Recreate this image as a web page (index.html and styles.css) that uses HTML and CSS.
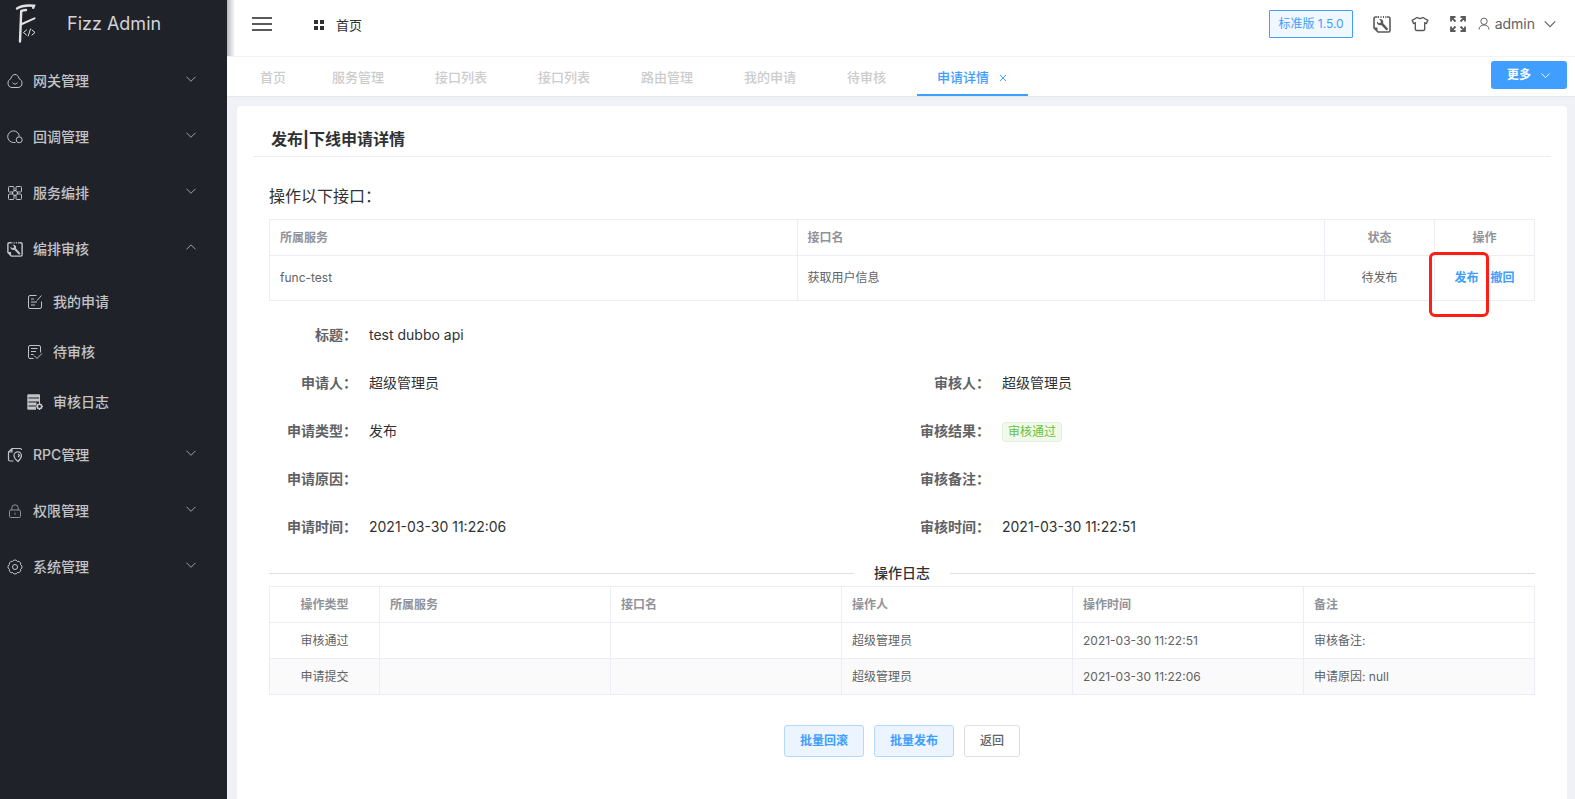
FILE: index.html
```html
<!DOCTYPE html>
<html lang="zh-CN">
<head>
<meta charset="utf-8">
<title>Fizz Admin</title>
<link rel="stylesheet" href="styles.css">
</head>
<body>
<svg class="sprite" aria-hidden="true">
  <symbol id="down" viewBox="0 0 12 12"><path d="M1.5 3.8 6 8.3l4.500-4.500"/></symbol>
  <symbol id="up" viewBox="0 0 12 12"><path d="M1.500 8.300 6 3.800l4.500 4.500"/></symbol>
  <symbol id="tool" viewBox="0 0 18 18">
    <path d="M4.500 2H2.500Q1 2 1 3.500V13l4 4h10.500q1.500 0 1.500-1.500V3.500Q17 2 15.500 2H13.800" stroke-width="1.600"/>
    <path d="M5.500 1v2M8 1v2M10.500 1v2M12.800 1v2" stroke-width="1"/>
    <path class="solid" d="M1 12.500h3.500V17z"/>
    <path class="solid" d="M6.300 4.200c2-.5 4 .8 4 2.700l-.3 1.200 4.800 5.300q.5 1-.3 1.700-.8.500-1.500-.1L8.200 9.900c-1.900.8-4.100-.4-4.300-2.500l.1-1 2 1.800 1.600-.5.300-1.500z"/>
  </symbol>
</svg>
<div class="app">
  <aside class="sidebar">
    <div class="brand">
      <svg class="brand-logo" viewBox="0 0 24 42" aria-hidden="true">
        <path d="M2 5.500C6 3 12 2 19 2.800l-.8 2" stroke-width="2.400"/>
        <path d="M6.500 8c1-.6 2.500-.9 4.500-1M6.200 8 5 38.500" stroke-width="2.400"/>
        <path d="M5.800 21.500 19.500 15.300" stroke-width="2"/>
        <path d="m11.500 27-3 2.500 3 2.500M17 27l3 2.500-3 2.500M15.500 26l-2.300 7" stroke-width="1"/>
      </svg>
      <span class="brand-name">Fizz Admin</span>
    </div>
    <nav class="menu">
      <a class="item" href="#gateway"><svg class="icon" viewBox="0 0 16 16"><path d="M8 1.500c2 0 3.500 1.500 4 4 2 1 3 2.700 3 4.700 0 2.600-1.500 4.300-4 4.300H5c-2.500 0-4-1.700-4-4.300 0-2 1-3.700 3-4.700.5-2.500 2-4 4-4zM5.500 9.500c1.200 2 3.800 2 5 0"/></svg><span>网关管理</span><svg class="arrow"><use href="#down"/></svg></a>
      <a class="item" href="#callback"><svg class="icon" viewBox="0 0 16 16"><path d="M8.500 13.500H6.500a5.800 5.800 0 1 1 5.800-6"/><circle cx="12.200" cy="10.800" r="3"/></svg><span>回调管理</span><svg class="arrow"><use href="#down"/></svg></a>
      <a class="item" href="#service"><svg class="icon" viewBox="0 0 16 16"><rect x="1.500" y="1.500" width="5.500" height="5.500" rx="1"/><rect x="9" y="1.500" width="5.500" height="5.500" rx="1"/><rect x="1.500" y="9" width="5.500" height="5.500" rx="1"/><rect x="9" y="9" width="5.500" height="5.500" rx="1"/><path d="M7 5.500h2M7 10.500h2M5.500 7v2M10.500 7v2"/></svg><span>服务编排</span><svg class="arrow"><use href="#down"/></svg></a>
      <a class="item" href="#audit"><svg class="icon"><use href="#tool"/></svg><span>编排审核</span><svg class="arrow"><use href="#up"/></svg></a>
      <a class="item sub" href="#mine"><svg class="icon" viewBox="0 0 16 16"><path d="M9.500 1.500H3Q1.500 1.500 1.500 3v10q0 1.500 1.500 1.500h10q1.500 0 1.500-1.500V7.500M4 5h3M4 8h6M4 11h4M10 6.500l4.500-5"/></svg><span>我的申请</span></a>
      <a class="item sub" href="#pending"><svg class="icon" viewBox="0 0 16 16"><path d="M6.500 14.500H3Q1.500 14.500 1.500 13V3Q1.500 1.500 3 1.500h9q1.500 0 1.500 1.500v5.500M4 4.500h6.500M4 7.500h5M4 10.500h2.500M7 11.500l3 3L15 9.500"/></svg><span>待审核</span></a>
      <a class="item sub" href="#log"><svg class="icon" viewBox="0 0 16 16"><path class="solid" d="M.5.500h12.500v3H.5zM.5 4.500h12.500v3H.5zM.5 8.500h9v3H.5zM.5 12.500h8.500v3H.5z"/><path d="M1 1h11.500v8M1 1v14h8"/><circle cx="12.500" cy="12.500" r="2.200" stroke-width="1.600"/><path d="M12.500 9v1M12.500 15v1M9 12.500h1M15 12.500h1M10 10l.8.800M15 15l-.8-.8M15 10l-.8.800M10 15l.8-.8"/></svg><span>审核日志</span></a>
      <a class="item" href="#rpc"><svg class="icon" viewBox="0 0 16 16"><path d="M6.500 14H3Q1.500 14 1.500 12.500V5L5 1.500h8q1.500 0 1.500 1.500M5 1.500V5H1.500" stroke-width="1.200"/><path d="M11 14.500c-2.500-2-4-4-4-6a3.700 3.700 0 0 1 7.400 0c0 2-1.400 4-3.400 6zM11 7l1.500 1.500L11 10" stroke-width="1.200"/></svg><span>RPC管理</span><svg class="arrow"><use href="#down"/></svg></a>
      <a class="item" href="#auth"><svg class="icon dim" viewBox="0 0 16 16"><rect x="2.500" y="7" width="11" height="7.500" rx="1.200"/><path d="M4.800 7V5a3.200 3.200 0 0 1 6.400 0v2M8 9.700v2"/></svg><span>权限管理</span><svg class="arrow"><use href="#down"/></svg></a>
      <a class="item" href="#system"><svg class="icon" viewBox="0 0 16 16"><path d="M14.900 6.800V9.200Q12.800 10 13.700 12L12 13.700Q10 12.800 9.200 14.900H6.800Q6 12.800 4 13.700L2.300 12Q3.200 10 1.100 9.200V6.800Q3.200 6 2.300 4L4 2.300Q6 3.200 6.800 1.100H9.200Q10 3.200 12 2.300L13.700 4Q12.800 6 14.900 6.800z"/><circle cx="8" cy="8" r="2.500"/></svg><span>系统管理</span><svg class="arrow"><use href="#down"/></svg></a>
    </nav>
  </aside>
  <div class="main">
    <header class="topbar">
      <button class="plain" type="button" aria-label="收起菜单"><svg class="burger" viewBox="0 0 20 16"><path d="M0 2h20M0 8h20M0 14h20"/></svg></button>
      <a class="crumb" href="#home"><svg class="grid" viewBox="0 0 10 10"><path class="solid" d="M0 0h4v4H0zM6 0h4v4H6zM0 6h4v4H0zM6 6h4v4H6z"/></svg>首页</a>
      <div class="tools">
        <button class="version" type="button">标准版 1.5.0</button>
        <button class="plain" type="button" aria-label="工具"><svg class="tool"><use href="#tool"/></svg></button>
        <button class="plain" type="button" aria-label="主题"><svg class="tool" viewBox="0 0 18 18"><path d="M6 2.500c1.500 1.300 4.500 1.300 6 0l4.800 2.800-1.300 3-1.800-.5V14q0 1.500-1.500 1.500H5.800q-1.500 0-1.500-1.500V7.800l-1.800.5-1.300-3z" stroke-width="1.400"/></svg></button>
        <button class="plain" type="button" aria-label="全屏"><svg class="tool" viewBox="0 0 18 18"><path d="M2 6.500V2h4.500M11.500 2H16v4.500M16 11.500V16h-4.500M6.500 16H2v-4.500M2 2l4.500 4.500M16 2l-4.500 4.500M16 16l-4.500-4.500M2 16l4.500-4.500" stroke-width="1.800"/></svg></button>
        <button class="user" type="button"><svg class="person" viewBox="0 0 12 14"><circle cx="6" cy="4.300" r="3.200"/><path d="M1 12.500c0-6 10-6 10 0"/></svg>admin<svg class="caret"><use href="#down"/></svg></button>
      </div>
    </header>
    <div class="tabbar">
      <nav class="tabs">
        <a class="tab home" href="#t1">首页</a>
        <a class="tab" href="#t2">服务管理</a>
        <a class="tab" href="#t3">接口列表</a>
        <a class="tab" href="#t4">接口列表</a>
        <a class="tab" href="#t5">路由管理</a>
        <a class="tab" href="#t6">我的申请</a>
        <a class="tab" href="#t7">待审核</a>
        <a class="tab active" href="#t8">申请详情<svg class="close" viewBox="0 0 8 8"><path d="m1 1 6 6M7 1 1 7"/></svg></a>
      </nav>
      <button class="more" type="button">更多<svg class="arrow-more"><use href="#down"/></svg></button>
    </div>
    <main class="content">
      <section class="card">
        <h1 class="title">发布|下线申请详情</h1>
        <div class="body">
          <h2 class="lead">操作以下接口：</h2>
          <table class="table">
            <colgroup><col><col><col class="c-type"><col class="c-op"></colgroup>
            <thead><tr><th>所属服务</th><th>接口名</th><th class="center">状态</th><th class="center">操作</th></tr></thead>
            <tbody><tr class="tall"><td>func-test</td><td>获取用户信息</td><td class="center">待发布</td><td><div class="ops"><button class="link marked" type="button">发布</button><button class="link" type="button">撤回</button></div></td></tr></tbody>
          </table>
          <dl class="details">
            <div class="field wide"><dt>标题：</dt><dd>test dubbo api</dd></div>
            <div class="field"><dt>申请人：</dt><dd>超级管理员</dd></div>
            <div class="field"><dt>审核人：</dt><dd>超级管理员</dd></div>
            <div class="field"><dt>申请类型：</dt><dd>发布</dd></div>
            <div class="field"><dt>审核结果：</dt><dd><span class="tag">审核通过</span></dd></div>
            <div class="field"><dt>申请原因：</dt><dd></dd></div>
            <div class="field"><dt>审核备注：</dt><dd></dd></div>
            <div class="field"><dt>申请时间：</dt><dd>2021-03-30 11:22:06</dd></div>
            <div class="field"><dt>审核时间：</dt><dd>2021-03-30 11:22:51</dd></div>
          </dl>
          <h2 class="divider">操作日志</h2>
          <table class="table">
            <colgroup><col class="c-type"><col><col><col><col><col></colgroup>
            <thead><tr><th class="center">操作类型</th><th>所属服务</th><th>接口名</th><th>操作人</th><th>操作时间</th><th>备注</th></tr></thead>
            <tbody>
              <tr><td class="center">审核通过</td><td></td><td></td><td>超级管理员</td><td>2021-03-30 11:22:51</td><td>审核备注:</td></tr>
              <tr class="striped"><td class="center">申请提交</td><td></td><td></td><td>超级管理员</td><td>2021-03-30 11:22:06</td><td>申请原因: null</td></tr>
            </tbody>
          </table>
          <div class="actions">
            <button class="btn primary" type="button">批量回滚</button>
            <button class="btn primary" type="button">批量发布</button>
            <button class="btn" type="button">返回</button>
          </div>
        </div>
      </section>
    </main>
  </div>
</div>
</body>
</html>
```
FILE: styles.css
```css
* { box-sizing: border-box; }
body {
  margin: 0;
  font: 14px/20px Inter, "Noto Sans CJK SC", sans-serif;
  color: #303133;
  background: #eff1f6;
}
a { color: inherit; text-decoration: none; }
button { font: inherit; color: inherit; cursor: pointer; }
svg { display: block; flex: none; fill: none; stroke: currentColor; }
.solid { fill: currentColor; stroke: none; }
.sprite { position: absolute; width: 0; height: 0; }
.app { display: flex; min-height: 100vh; }

/* Sidebar */
.sidebar { flex: none; width: 227px; background: #20222a; color: #c2c3c6; }
.brand { display: flex; align-items: flex-start; gap: 28px; height: 53px; padding: 3px 0 0 15px; }
.brand-logo { width: 24px; height: 42px; stroke-linecap: round; color: #e2e2e4; }
.brand-name { font-size: 18px; line-height: 42px; color: #d3d3d5; }
.menu { font-weight: 500; }
.item { display: flex; align-items: center; gap: 10px; height: 56px; padding: 0 30px 0 7px; }
.item.sub { height: 50px; padding-left: 27px; }
.icon { width: 16px; height: 16px; }
.icon.dim { color: #8f9095; }
.arrow { width: 12px; height: 12px; margin: 0 0 4px auto; color: #a0a1a5; }

/* Top bar */
.main { flex: 1; min-width: 0; display: flex; flex-direction: column; }
.topbar {
  display: flex;
  align-items: center;
  height: 57px;
  padding: 0 18px 8px 25px;
  border-bottom: 1px solid #f3f3f4;
  background: linear-gradient(90deg, #b6b9bd, #fff 8px);
}
.plain { padding: 0; border: 0; background: none; color: #5a5a5a; }
.burger { width: 20px; height: 16px; stroke-width: 2; }
.crumb { display: flex; align-items: center; gap: 12px; margin-left: 42px; padding-top: 2px; font-size: 13px; }
.grid { width: 10px; height: 10px; }
.tools { display: flex; align-items: center; gap: 20px; margin-left: auto; }
.version {
  height: 28px;
  padding: 0 8px;
  border: 1px solid #409eff;
  border-radius: 1px;
  background: #f0f7ff;
  color: #409eff;
  font-size: 12px;
}
.tool { width: 18px; height: 18px; }
.user { display: flex; align-items: center; gap: 5px; margin-left: -9px; padding: 0; border: 0; background: none; color: #606266; }
.person { width: 12px; height: 14px; }
.caret { width: 14px; height: 14px; margin-left: 3px; }

/* Tabs */
.tabbar { display: flex; align-items: flex-start; height: 40px; padding: 0 8px 0 13px; border-bottom: 1px solid #e4e6eb; background: #fff; }
.tabs { display: flex; }
.tab { display: flex; align-items: center; gap: 10px; height: 39px; padding: 0 31px 0 20px; color: #ccc; font-size: 13px; font-weight: 500; }
.tab.home { padding-right: 26px; }
.tab.active { padding: 2px 21px 0 20px; border-bottom: 2px solid #409eff; color: #409eff; }
.close { width: 8px; height: 8px; margin-top: 2px; }
.more {
  display: flex;
  align-items: center;
  gap: 9px;
  height: 28px;
  margin: 4px 0 0 auto;
  padding: 0 16px;
  border: 0;
  border-radius: 3px;
  background: #409eff;
  color: #fff;
  font-size: 12px;
  font-weight: 700;
}
.arrow-more { width: 11px; height: 11px; }

/* Content card */
.content { flex: 1; display: flex; padding: 9px 8px 0 10px; }
.card { flex: 1; min-width: 0; padding: 16px; border-radius: 4px 4px 0 0; background: #fff; }
.title { margin: 0; padding-left: 18px; border-bottom: 1px solid #ebeef5; font-size: 16px; line-height: 34px; font-weight: 700; }
.body { padding: 24px 16px 0; }
.lead { margin: 0 0 8px; font-size: 16px; line-height: 30px; font-weight: 400; }

.table { width: 100%; table-layout: fixed; border-collapse: separate; border-spacing: 0; border: solid #ebeef5; border-width: 1px 0 0 1px; color: #606266; font-size: 12px; }
.table th, .table td { height: 36px; padding: 0 10px; border: solid #ebeef5; border-width: 0 1px 1px 0; text-align: left; }
.table th { color: #909399; font-weight: 700; }
.table .tall td { height: 45px; }
.table .center { text-align: center; }
.striped { background: #fafafa; }
.c-type { width: 110px; }
.c-op { width: 100px; }
.ops { display: flex; justify-content: center; gap: 12px; }
.link { position: relative; padding: 0; border: 0; background: none; color: #409eff; font-weight: 700; }
.marked::after { content: ""; position: absolute; inset: -16px -10px -29px -25px; border: 3px solid #ff1e14; border-radius: 6px; }

.details { display: grid; grid-template-columns: 1fr 1fr; margin: 10px 0 0; line-height: 48px; }
.field { display: flex; height: 48px; }
.field.wide { grid-column: 1 / -1; }
.field dt { width: 100px; padding-right: 12px; text-align: right; color: #606266; font-weight: 700; }
.field dd { margin: 0; }
.tag { display: inline-block; height: 20px; padding: 0 5px; border: 1px solid #e1f3d8; border-radius: 4px; background: #f0f9eb; color: #67c23a; font-size: 12px; line-height: 18px; }

.divider { display: flex; align-items: center; gap: 20px; margin: 12px 0 3px; font-size: 14px; line-height: 20px; font-weight: 500; }
.divider::before, .divider::after { content: ""; flex: 1; height: 1px; background: #dcdfe6; }

.actions { display: flex; justify-content: center; gap: 10px; margin-top: 30px; }
.btn { height: 32px; padding: 0 15px; border: 1px solid #dcdfe6; border-radius: 3px; background: #fff; color: #606266; font-size: 12px; font-weight: 500; }
.btn.primary { border-color: #b3d8ff; background: #ecf5ff; color: #409eff; font-weight: 700; }
```
